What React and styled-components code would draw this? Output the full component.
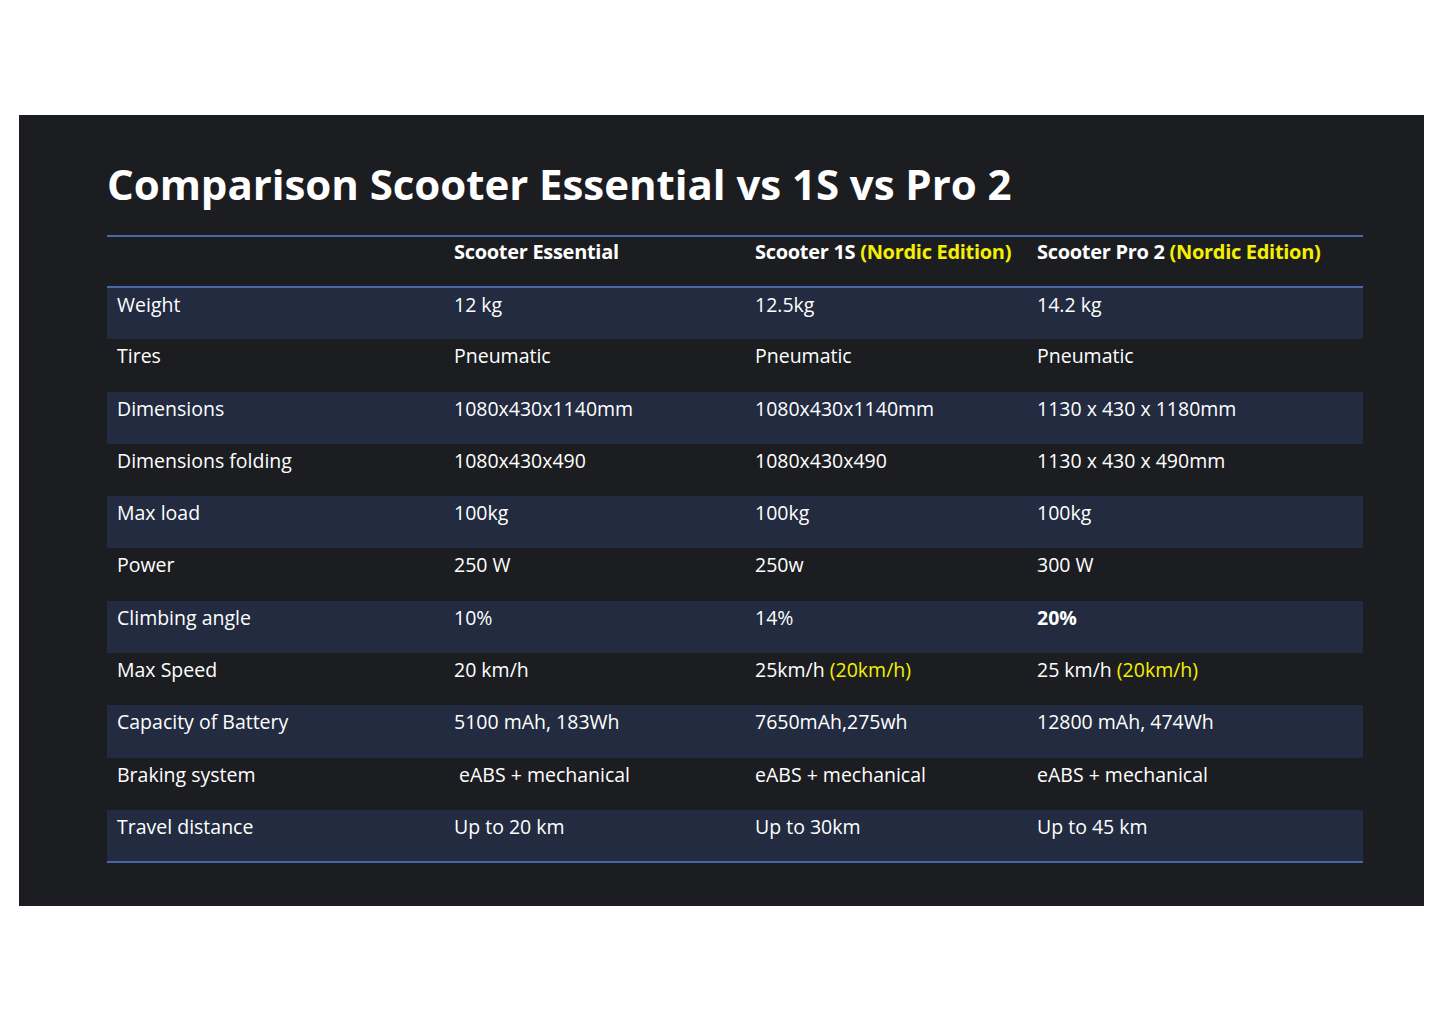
import React from "react";
import styled, { createGlobalStyle } from "styled-components";

const Global = createGlobalStyle`
  html, body { margin: 0; padding: 0; background: #ffffff; }
  body { font-family: "Open Sans", "Noto Sans", sans-serif; }
`;

const Page = styled.div`
  width: 1445px;
  height: 1022px;
  padding-top: 115px;
  padding-left: 19px;
  box-sizing: border-box;
`;

const Slide = styled.section`
  width: 1405px;
  height: 791px;
  background: #1c1d21;
  box-sizing: border-box;
  padding: 0 61px 0 88px;
  display: flex;
  flex-direction: column;
`;

const Title = styled.h1`
  margin: 0;
  padding-top: 43px;
  height: 77px;
  box-sizing: content-box;
  font-family: "Open Sans", sans-serif;
  font-weight: 700;
  font-size: 42px;
  line-height: 52px;
  color: #ffffff;
  letter-spacing: -0.05px;
`;

const Table = styled.table`
  border-collapse: collapse;
  width: 1256px;
  table-layout: fixed;
  border-top: 2px solid #4767a6;
  border-bottom: 2px solid #4767a6;
`;

const HeadRow = styled.tr`
  height: 51px;
  border-bottom: 2px solid #4767a6;
`;

const Row = styled.tr`
  height: 52.3px;
  background: ${(p) => (p.$band ? "#222b3f" : "transparent")};
`;

const Cell = styled.td`
  vertical-align: top;
  padding: 3px 10px 0 10px;
  font-family: "Open Sans", sans-serif;
  font-size: 19.5px;
  line-height: 27px;
  color: #ffffff;
  font-weight: 400;
  white-space: nowrap;
  letter-spacing: 0;
`;

const HeadCell = styled(Cell).attrs({ as: "th" })`
  text-align: left;
  font-weight: 700;
  font-size: 20px;
  letter-spacing: -0.3px;
  padding-top: 1px;
`;

const Yellow = styled.span`
  color: #f5f000;
`;

const Strong = styled.span`
  font-weight: 700;
`;

const rows = [
  ["Weight", "12 kg", "12.5kg", "14.2 kg"],
  ["Tires", "Pneumatic", "Pneumatic", "Pneumatic"],
  ["Dimensions", "1080x430x1140mm", "1080x430x1140mm", "1130 x 430 x 1180mm"],
  ["Dimensions folding", "1080x430x490", "1080x430x490", "1130 x 430 x 490mm"],
  ["Max load", "100kg", "100kg", "100kg"],
  ["Power", "250 W", "250w", "300 W"],
  ["Climbing angle", "10%", "14%", <Strong key="b">20%</Strong>],
  [
    "Max Speed",
    "20 km/h",
    <>25km/h <Yellow>(20km/h)</Yellow></>,
    <>25 km/h <Yellow>(20km/h)</Yellow></>,
  ],
  ["Capacity of Battery", "5100 mAh, 183Wh", "7650mAh,275wh", "12800 mAh, 474Wh"],
  ["Braking system", "\u00a0eABS + mechanical", "eABS + mechanical", "eABS + mechanical"],
  ["Travel distance", "Up to 20 km", "Up to 30km", "Up to 45 km"],
];

export default function App() {
  return (
    <>
      <Global />
      <Page>
        <Slide>
          <Title>Comparison Scooter Essential vs 1S vs Pro 2</Title>
          <Table>
            <colgroup>
              <col style={{ width: 337 }} />
              <col style={{ width: 301 }} />
              <col style={{ width: 282 }} />
              <col style={{ width: 336 }} />
            </colgroup>
            <thead>
              <HeadRow>
                <HeadCell></HeadCell>
                <HeadCell>Scooter Essential</HeadCell>
                <HeadCell>
                  Scooter 1S <Yellow>(Nordic Edition)</Yellow>
                </HeadCell>
                <HeadCell>
                  Scooter Pro 2 <Yellow>(Nordic Edition)</Yellow>
                </HeadCell>
              </HeadRow>
            </thead>
            <tbody>
              {rows.map((r, i) => (
                <Row key={i} $band={i % 2 === 0}>
                  {r.map((c, j) => (
                    <Cell key={j}>{c}</Cell>
                  ))}
                </Row>
              ))}
            </tbody>
          </Table>
        </Slide>
      </Page>
    </>
  );
}
